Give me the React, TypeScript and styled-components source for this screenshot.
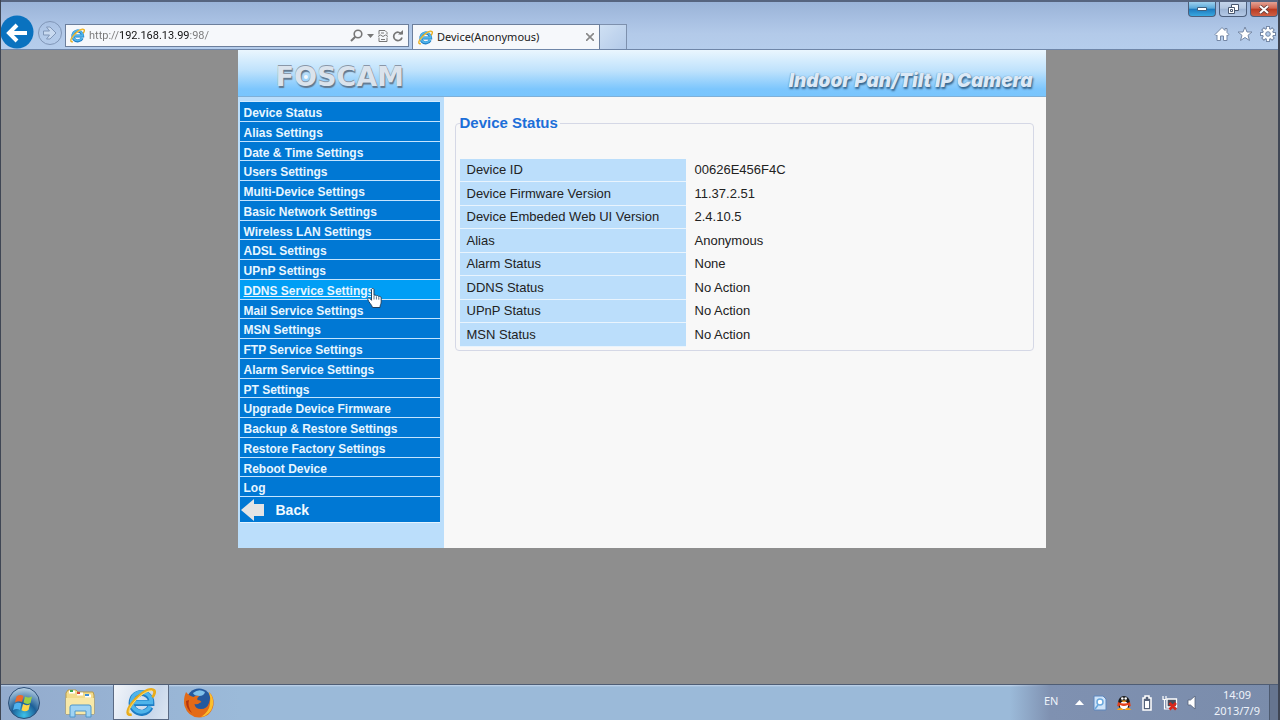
import React from 'react';
import styled, { createGlobalStyle, css } from 'styled-components';

const GlobalStyle = createGlobalStyle`
  * { box-sizing: border-box; }
  body { margin: 0; background: #8e8e8e; }
  button { padding: 0; border: 0; background: none; font: inherit; cursor: pointer; }
  svg { display: block; flex: none; }
`;

const ui = `"Noto Sans", "Open Sans", sans-serif`;
const arial = `"Liberation Sans", Arial, sans-serif`;

const Desktop = styled.div`
  min-height: 100vh;
  display: flex;
  flex-direction: column;
  background: #8e8e8e;
  border-right: 2px solid #3f4654;
  border-left: 1px solid #3f4654;
  font-family: ${arial};
`;

const BrowserBar = styled.header`
  height: 50px;
  display: flex;
  align-items: flex-end;
  border-top: 2px solid #56647f;
  border-bottom: 1px solid #6f86a8;
  background: linear-gradient(#9ab3d8, #a8c0e2 18px, #b3cae9 32px, #b5cdec);
`;

const NavButtons = styled.div`
  display: flex;
  align-items: center;
  width: 64px;
`;

const AddressBox = styled.form`
  display: flex;
  align-items: center;
  flex: 0 1 344px;
  height: 23px;
  margin-bottom: 2px;
  padding: 0 4px;
  gap: 4px;
  border: 1px solid #6c7f9c;
  background: #f6f8fb;
`;

const AddressInput = styled.input`
  flex: 1;
  min-width: 0;
  padding: 0;
  border: 0;
  outline: 0;
  font: 11px/16px Roboto, ${ui};
  color: transparent;
  background: linear-gradient(90deg, #777 30px, #111 30px 101px, #777 101px);
  background-clip: text;
  -webkit-background-clip: text;
`;

const TabStrip = styled.div`
  display: flex;
  margin-left: 3px;
  flex: 1;
`;

const Tab = styled.div`
  display: flex;
  align-items: center;
  gap: 4px;
  width: 188px;
  height: 25px;
  padding: 0 5px;
  border: 1px solid #6c7f9c;
  border-bottom: 0;
  background: #f6f8fb;
  font: 11px/16px ${ui};
  color: #1a1a1a;
`;

const TabTitle = styled.span`
  flex: 1;
  white-space: nowrap;
`;

const NewTab = styled.button`
  width: 27px;
  height: 25px;
  border: 1px solid #7d90ad;
  border-left: 0;
  border-bottom: 0;
  background: linear-gradient(135deg, #cfe0f3, #b3cae9);
`;

const WindowSide = styled.div`
  align-self: stretch;
  display: flex;
  flex-direction: column;
  align-items: flex-end;
  justify-content: space-between;
`;

const WindowControls = styled.div`
  display: flex;
  gap: 3px;
`;

const tones = {
  blue: 'linear-gradient(#9fd0ee, #58a9da 45%, #1c78bd 50%, #39a8e0)',
  plain: 'linear-gradient(#c4d4ea, #b3c6e0 45%, #9db4d4 50%, #b4c9e6)',
  red: 'linear-gradient(#e2a295, #d0654f 45%, #b93a20 50%, #cf6046)',
};

const ControlButton = styled.button<{ $tone: keyof typeof tones }>`
  display: flex;
  align-items: center;
  justify-content: center;
  width: 28px;
  height: 15px;
  border: 1px solid #4d5f7c;
  border-top: 0;
  border-radius: 0 0 4px 4px;
  background: ${(p) => tones[p.$tone]};
`;

const Tools = styled.div`
  display: flex;
  gap: 7px;
  padding: 0 2px 7px 0;
`;

const Viewport = styled.main`
  flex: 1;
  display: flex;
  flex-direction: column;
  align-items: center;
  padding-left: 4px;
`;

const Page = styled.div`
  width: 100%;
  max-width: 808px;
  background: #f8f8f8;
`;

const Banner = styled.div`
  display: flex;
  justify-content: space-between;
  height: 47px;
  padding: 0 13px 0 38px;
  border-bottom: 1px solid #7fb0d8;
  background: linear-gradient(#eaf6fe, #bfe2fc 45%, #7cc6fd 85%, #79c5fd);
`;

const Logo = styled.div`
  position: relative;
  align-self: center;
  margin-top: 8px;
  font: bold 27px/28px "DejaVu Sans", sans-serif;
  color: #dbe3ec;
  text-shadow: 0 -1px 0 #8a97a8, 1px 2px 1px #62788f;
`;

const Pupil = styled.svg`
  position: absolute;
  left: 28px;
  top: 12px;
`;

const Slogan = styled.div`
  align-self: flex-end;
  padding-bottom: 3px;
  font: italic 900 19px/24px Inter, ${arial};
  color: #dce9f6;
  text-shadow: 1px 2px 2px #35648c, 0 0 1px #4f7ba2;
  white-space: nowrap;
`;

const Columns = styled.div`
  display: flex;
  align-items: stretch;
`;

const Sidebar = styled.nav`
  width: 206px;
  padding: 4px 4px 25px 2px;
  background: #bbdefb;
`;

const Menu = styled.ul`
  display: grid;
  grid-auto-rows: 1fr;
  height: 396px;
  margin: 0;
  padding: 0;
  list-style: none;
  border-top: 1px solid #d5ecff;
`;

const MenuItem = styled.li`
  display: flex;
  border-bottom: 1px solid #c4e4ff;
`;

const MenuLink = styled.a<{ $hovered?: boolean }>`
  flex: 1;
  padding: 5px 0 0 4px;
  font: bold 12px/13px ${arial};
  color: #e8f6ff;
  background: #0078d4;
  text-decoration: none;
  white-space: nowrap;
  ${(p) =>
    p.$hovered &&
    css`
      background: #009ef5;
      text-decoration: underline;
    `}
`;

const BackLink = styled.a`
  display: flex;
  align-items: center;
  gap: 11px;
  height: 26px;
  padding-left: 1px;
  border-bottom: 1px solid #e3f3ff;
  background: #0078d4;
  color: #f2faff;
  font: bold 14px/24px ${arial};
  text-decoration: none;
`;

const Content = styled.section`
  flex: 1;
  padding: 17px 12px 0 11px;
`;

const Panel = styled.fieldset`
  margin: 0;
  padding: 27px 4px 3px 4px;
  border: 1px solid #d5d8e6;
  border-radius: 4px;
`;

const PanelTitle = styled.legend`
  padding: 0 2px 0 0;
  font: bold 15px/18px ${arial};
  color: #1c6fd8;
`;

const StatusTable = styled.table`
  width: 100%;
  height: 188px;
  border-collapse: collapse;
  font: 13px/16px ${arial};
  color: #222;
`;

const Label = styled.th`
  width: 226px;
  padding: 0 0 0 7px;
  border-bottom: 1px solid #e9f4fd;
  background: #bbdefb;
  font-weight: normal;
  text-align: left;
`;

const Value = styled.td`
  padding: 0 0 0 9px;
`;

const HandPointer = styled.svg`
  position: absolute;
  left: 127px;
  top: 8px;
`;

const HoverAnchor = styled.span`
  position: relative;
  width: 0;
  order: -1;
  z-index: 1;
`;

const Taskbar = styled.footer`
  display: flex;
  align-items: stretch;
  height: 36px;
  border-top: 1px solid #4f5d74;
  background: linear-gradient(#c3d6ec, transparent 2px), linear-gradient(90deg, #93abcd, #9bbad9 240px);
`;

const TaskButton = styled.button<{ $w: number; $active?: boolean }>`
  display: flex;
  align-items: center;
  justify-content: center;
  width: ${(p) => p.$w}px;
  ${(p) =>
    p.$active &&
    css`
      border: 1px solid #5a6a84;
      border-top: 0;
      background: linear-gradient(110deg, #f1f5fa, #c9d7ea 70%, #dce6f2);
    `}
`;

const Tray = styled.div`
  display: flex;
  align-items: center;
  margin-left: auto;
  padding-left: 34px;
  background: linear-gradient(90deg, transparent, #7f91b1 40px, #7a8cab);
  color: #eef3fa;
  font: 11px/16px ${ui};
`;

const TrayIcons = styled.div`
  display: flex;
  align-items: center;
  gap: 9px;
`;

const Language = styled.span`
  width: 22px;
  padding-bottom: 4px;
`;

const Clock = styled.time`
  width: 72px;
  padding-left: 8px;
  text-align: center;
`;

const ShowDesktop = styled.button`
  align-self: stretch;
  width: 9px;
  border-left: 1px solid #4d5a70;
  background: #66758f;
`;

const IeLogo = ({ size }: { size: number }) => (
  <svg width={size} height={size} viewBox="0 0 32 32" fill="none" aria-hidden="true">
    <path d="M26 21.5A10.5 10.5 0 1 1 27 17H8" stroke="#1d7cc4" strokeWidth="6.5" />
    <path d="M26 20.5A10.5 10.5 0 1 1 27 16.5H8" stroke="#4fb4ea" strokeWidth="4" />
    <path d="M6 29C1 31 0 26 6 18 13 8 24 1 29 3c3 1 1 6-1 8" stroke="#e9ac1c" strokeWidth="3" />
    <path d="M5 28C2 28 3 23 7 18 14 9 23 3 28 4" stroke="#ffe278" strokeWidth="1" />
  </svg>
);

const BackIcon = () => (
  <svg width="34" height="34" viewBox="0 0 34 34">
    <circle cx="16" cy="17" r="16.5" fill="#0a72bf" />
    <path d="M26 18H9M16 10l-8 8 8 8" fill="none" stroke="#fff" strokeWidth="4" />
  </svg>
);

const ForwardIcon = () => (
  <svg width="28" height="28" viewBox="0 0 28 28" fill="none" stroke="#8197b8">
    <circle cx="15" cy="15" r="11.5" />
    <path d="M8.500 13h6l-3-4h3.500l6 6-6 6h-3.500l3-4h-6z" fill="#c9daf0" />
  </svg>
);

const SearchIcon = () => (
  <svg width="13" height="13" viewBox="0 0 13 13" fill="none" stroke="#777" strokeWidth="1.6">
    <circle cx="8" cy="5" r="3.8" />
    <path d="M5.300 7.700L1 12" strokeWidth="2" />
  </svg>
);

const CaretIcon = () => (
  <svg width="7" height="4" viewBox="0 0 7 4"><path d="M0 0h7L3.500 4z" fill="#777" /></svg>
);

const BrokenPageIcon = () => (
  <svg width="10" height="12" viewBox="0 0 10 12" fill="none" stroke="#777">
    <path d="M1 4.500V.5h6l2 2v2M1 7.500v4h8v-4M0 6.500l2.500-1.500L5 6.500 7.500 5 10 6.500M3 3h3M3 9.500h4" />
  </svg>
);

const RefreshIcon = () => (
  <svg width="12" height="12" viewBox="0 0 12 12" fill="none" stroke="#777" strokeWidth="1.700">
    <path d="M9.500 4.200A4.200 4.200 0 1 0 10 7.500" />
    <path d="M6 4.500h5V0z" fill="#777" stroke="none" />
  </svg>
);

const HomeIcon = () => (
  <svg width="16" height="16" viewBox="0 0 16 16" fill="#fff" stroke="#7487a5">
    <path d="M8 1.500L1 8.500l1.200 1.200L3 9v5.500h3.500V10h3v4.500H13V9l.8.7L15 8.500l-2-2V2.500h-2v2z" />
  </svg>
);

const StarIcon = () => (
  <svg width="16" height="16" viewBox="0 0 16 16" fill="#fff" stroke="#7487a5">
    <path d="M8 1l2 5h5l-4 3.300 1.500 5.200L8 11.500l-4.500 3L5 9.300 1 6h5z" />
  </svg>
);

const GearIcon = () => (
  <svg width="16" height="16" viewBox="0 0 16 16">
    <g stroke="#7487a5" strokeWidth="4"><path d="M8 0v16M0 8h16M2.500 2.500l11 11M13.500 2.500l-11 11" /></g>
    <circle cx="8" cy="8" r="6" fill="#7487a5" />
    <g stroke="#fff" strokeWidth="2.200"><path d="M8 1v14M1 8h14M3.200 3.200l9.600 9.600M12.800 3.200l-9.600 9.600" /></g>
    <circle cx="8" cy="8" r="5" fill="#fff" />
    <circle cx="8" cy="8" r="2.300" fill="#b5cdec" stroke="#7487a5" />
  </svg>
);

const HandIcon = () => (
  <HandPointer width="16" height="21" viewBox="0 0 16 21" aria-hidden="true">
    <path
      d="M4.500 1.500c0-1.300 2.500-1.300 2.500 0v6c.4-.8 2.200-.6 2.400.5.500-.8 2.200-.5 2.400.7.600-.7 2.400-.3 2.400 1.200V14c0 2-1.200 3-1.200 5.500H5.500C5 17 1.500 14 .8 11.500c-.3-1.500 1.500-2 2.300-.8l1.400 1.600z"
      fill="#fff" stroke="#24425f"
    />
    <path d="M7 8v3.500M9.400 8.500v3M11.800 9.200v2.500" stroke="#56708a" strokeWidth="1" />
  </HandPointer>
);

const ArrowIcon = () => (
  <svg width="24" height="22" viewBox="0 0 24 22"><path d="M0 11L13 0v5h10v12H13v5z" fill="#e4e4e4" /></svg>
);

const StartOrb = () => (
  <svg width="34" height="34" viewBox="0 0 34 34">
    <defs>
      <radialGradient id="orb" cx=".5" cy=".9" r=".9">
        <stop offset="0" stopColor="#3cc2ea" /><stop offset=".45" stopColor="#1c5f97" /><stop offset="1" stopColor="#bcd3e6" />
      </radialGradient>
    </defs>
    <circle cx="17" cy="17" r="15.500" fill="url(#orb)" stroke="#2c4f78" />
    <path d="M9.500 10.500q3.500-2.500 7-.5l-1.500 6q-3.500-1.500-7 .5z" fill="#ee6a2c" />
    <path d="M18 10.500q3.500 2 7 0l-1.500 6.500q-3.500 2-7-.5z" fill="#9bcf45" />
    <path d="M7.500 18q3.500-2 7-.5L13 24q-3.500-2-7 .3z" fill="#4fb2ef" />
    <path d="M16 18q3.500 2.200 7 .2L21.500 24q-3.500 2.400-7 .2z" fill="#fdd548" />
  </svg>
);

const FolderIcon = () => (
  <svg width="32" height="30" viewBox="0 0 32 30">
    <path d="M2 26V5l2-3h8l2 2h15l1 3v19z" fill="#f3dc8c" stroke="#b99b4c" />
    <path d="M5 4h6M13 6h6M21 8h6" stroke="#fff" strokeWidth="3" />
    <path d="M6 3h3" stroke="#3ba64a" strokeWidth="2" /><path d="M13 5h3" stroke="#d84a35" strokeWidth="2" /><path d="M21 7h4" stroke="#3f8fd4" strokeWidth="2" />
    <path d="M2 10h28v16H2z" fill="#f8e8a8" />
    <path d="M6 29V19q0-2 2-2h17q2 0 2 2v10h-5v-6H11v6z" fill="#9fd3f3" stroke="#4f97cb" />
  </svg>
);

const FirefoxIcon = () => (
  <svg width="32" height="32" viewBox="0 0 32 32">
    <circle cx="16" cy="14" r="12.500" fill="#24599f" />
    <path d="M10 6q6-5 12-1-1 4-6 4t-6-3z" fill="#7fc0ea" />
    <path d="M3 5Q0 12 1.500 19 5 30 16 30.500 28 30 30.500 18 31.500 10 26 5q2 6 0 11-2 6-8 6-6 0-6.500-5 3 1 5-1l2-1q-1-2-4-2-1-2 2-4-4-1-6 1Q6 9 3 5z" fill="#e36a17" />
    <path d="M26 5q5 5 4 13-2 10-12 12 8-5 9-13 1-6-1-12z" fill="#fbc02d" />
    <path d="M3 14q0 8 6 12-5-7-3-13z" fill="#b3340f" />
  </svg>
);

const PageTrayIcon = () => (
  <svg width="14" height="16" viewBox="0 0 14 16">
    <path d="M1 1h9l3 3v11H1z" fill="#cfe3f8" stroke="#5c86bd" />
    <circle cx="7" cy="7" r="3" fill="#fff" stroke="#6aa8de" strokeWidth="1.500" />
    <path d="M5 10l-3 4" stroke="#6aa8de" strokeWidth="1.500" />
  </svg>
);

const PenguinIcon = () => (
  <svg width="16" height="17" viewBox="0 0 16 17">
    <ellipse cx="8" cy="9" rx="6" ry="7" fill="#1a1a1a" />
    <ellipse cx="8" cy="11.500" rx="4" ry="4" fill="#fff" />
    <circle cx="6.300" cy="4.500" r="1.300" fill="#fff" /><circle cx="9.700" cy="4.500" r="1.300" fill="#fff" />
    <path d="M5 6.500h6l-3 2z" fill="#f6a21b" />
    <path d="M2 8q6 3 12 0l.8 4q-1.800 1-3-1-4 2-7.600 0-1.200 2-3 1z" fill="#e2401b" />
    <path d="M1.500 15.500q3-2.500 5.500 0zM9 15.500q3-2.500 5.500 0z" fill="#f6a21b" stroke="#f6a21b" />
  </svg>
);

const BatteryIcon = () => (
  <svg width="12" height="16" viewBox="0 0 12 16">
    <path d="M4 1h4v2h2v12H2V3h2z" fill="#55627a" stroke="#fff" strokeWidth="1.500" />
    <path d="M4 6h4v7H4z" fill="#fff" />
  </svg>
);

const NetworkIcon = () => (
  <svg width="16" height="16" viewBox="0 0 16 16" fill="none">
    <path d="M5 4h9.500v8H5z" fill="#444c5c" stroke="#fff" strokeWidth="1.300" />
    <path d="M1 1v3.500h3V1M2.500 4.500V14H8" stroke="#fff" strokeWidth="1.200" />
    <path d="M7.500 8l6.500 6.500M14 8l-6.500 6.500" stroke="#d8271c" strokeWidth="2.600" />
  </svg>
);

const SpeakerIcon = () => (
  <svg width="10" height="15" viewBox="0 0 10 15"><path d="M1 5h2.500L8 1v13l-4.500-4H1z" fill="#fff" stroke="#55627a" strokeWidth=".8" /></svg>
);

const menu = [
  'Device Status', 'Alias Settings', 'Date & Time Settings', 'Users Settings', 'Multi-Device Settings',
  'Basic Network Settings', 'Wireless LAN Settings', 'ADSL Settings', 'UPnP Settings', 'DDNS Service Settings',
  'Mail Service Settings', 'MSN Settings', 'FTP Service Settings', 'Alarm Service Settings', 'PT Settings',
  'Upgrade Device Firmware', 'Backup & Restore Settings', 'Restore Factory Settings', 'Reboot Device', 'Log',
];

const status = [
  ['Device ID', '00626E456F4C'],
  ['Device Firmware Version', '11.37.2.51'],
  ['Device Embeded Web UI Version', '2.4.10.5'],
  ['Alias', 'Anonymous'],
  ['Alarm Status', 'None'],
  ['DDNS Status', 'No Action'],
  ['UPnP Status', 'No Action'],
  ['MSN Status', 'No Action'],
];

const hovered = 'DDNS Service Settings';

export default function App() {
  return (
    <Desktop>
      <GlobalStyle />
      <BrowserBar>
        <NavButtons>
          <button aria-label="Back"><BackIcon /></button>
          <button aria-label="Forward"><ForwardIcon /></button>
        </NavButtons>
        <AddressBox onSubmit={(e) => e.preventDefault()}>
          <IeLogo size={15} />
          <AddressInput aria-label="Address" defaultValue="http://192.168.13.99:98/" />
          <button type="button" aria-label="Search"><SearchIcon /></button>
          <button type="button" aria-label="Show address list"><CaretIcon /></button>
          <button type="button" aria-label="Compatibility view"><BrokenPageIcon /></button>
          <button type="button" aria-label="Refresh"><RefreshIcon /></button>
        </AddressBox>
        <TabStrip>
          <Tab>
            <IeLogo size={15} />
            <TabTitle>Device(Anonymous)</TabTitle>
            <button aria-label="Close tab">
              <svg width="8" height="8" viewBox="0 0 8 8" stroke="#888" strokeWidth="1.600"><path d="M0 0l8 8M8 0L0 8" /></svg>
            </button>
          </Tab>
          <NewTab aria-label="New tab" />
        </TabStrip>
        <WindowSide>
          <WindowControls>
            <ControlButton $tone="blue" aria-label="Minimize">
              <svg width="10" height="4" viewBox="0 0 10 4"><path d="M.5.5h9v3h-9z" fill="#fff" stroke="#3f607f" /></svg>
            </ControlButton>
            <ControlButton $tone="plain" aria-label="Restore">
              <svg width="11" height="10" viewBox="0 0 11 10" fill="#fff" stroke="#4a5870"><path d="M3.500.5h7v6h-7z" /><path d="M.5 3.500h6v6h-6zM2.500 5.500h2v2h-2z" /></svg>
            </ControlButton>
            <ControlButton $tone="red" aria-label="Close">
              <svg width="10" height="9" viewBox="0 0 10 9"><path d="M1 1l8 7M9 1L1 8" stroke="#5c3a3a" strokeWidth="3.500" /><path d="M1 1l8 7M9 1L1 8" stroke="#fff" strokeWidth="2" /></svg>
            </ControlButton>
          </WindowControls>
          <Tools>
            <button aria-label="Home"><HomeIcon /></button>
            <button aria-label="Favorites"><StarIcon /></button>
            <button aria-label="Tools"><GearIcon /></button>
          </Tools>
        </WindowSide>
      </BrowserBar>

      <Viewport>
        <Page>
          <Banner>
            <Logo>
              FOSCAM
              <Pupil width="4" height="4" viewBox="0 0 4 4" aria-hidden="true"><circle cx="2" cy="2" r="2" fill="#f4f8fc" /></Pupil>
            </Logo>
            <Slogan>Indoor Pan/Tilt IP Camera</Slogan>
          </Banner>
          <Columns>
            <Sidebar>
              <Menu>
                {menu.map((name) => (
                  <MenuItem key={name}>
                    <MenuLink href="#" $hovered={name === hovered}>{name}</MenuLink>
                    {name === hovered && <HoverAnchor><HandIcon /></HoverAnchor>}
                  </MenuItem>
                ))}
              </Menu>
              <BackLink href="#"><ArrowIcon />Back</BackLink>
            </Sidebar>
            <Content>
              <Panel>
                <PanelTitle>Device Status</PanelTitle>
                <StatusTable>
                  <tbody>
                    {status.map(([label, value]) => (
                      <tr key={label}>
                        <Label scope="row">{label}</Label>
                        <Value>{value}</Value>
                      </tr>
                    ))}
                  </tbody>
                </StatusTable>
              </Panel>
            </Content>
          </Columns>
        </Page>
      </Viewport>

      <Taskbar>
        <TaskButton $w={46} aria-label="Start"><StartOrb /></TaskButton>
        <TaskButton $w={66} aria-label="Explorer"><FolderIcon /></TaskButton>
        <TaskButton $w={56} $active aria-label="Internet Explorer"><IeLogo size={30} /></TaskButton>
        <TaskButton $w={60} aria-label="Firefox"><FirefoxIcon /></TaskButton>
        <Tray>
          <TrayIcons>
            <Language>EN</Language>
            <button aria-label="Show hidden icons">
              <svg width="9" height="5" viewBox="0 0 9 5"><path d="M0 5l4.500-5L9 5z" fill="#fff" /></svg>
            </button>
            <PageTrayIcon />
            <PenguinIcon />
            <BatteryIcon />
            <NetworkIcon />
            <SpeakerIcon />
          </TrayIcons>
          <Clock>14:09<br />2013/7/9</Clock>
          <ShowDesktop aria-label="Show desktop" />
        </Tray>
      </Taskbar>
    </Desktop>
  );
}
